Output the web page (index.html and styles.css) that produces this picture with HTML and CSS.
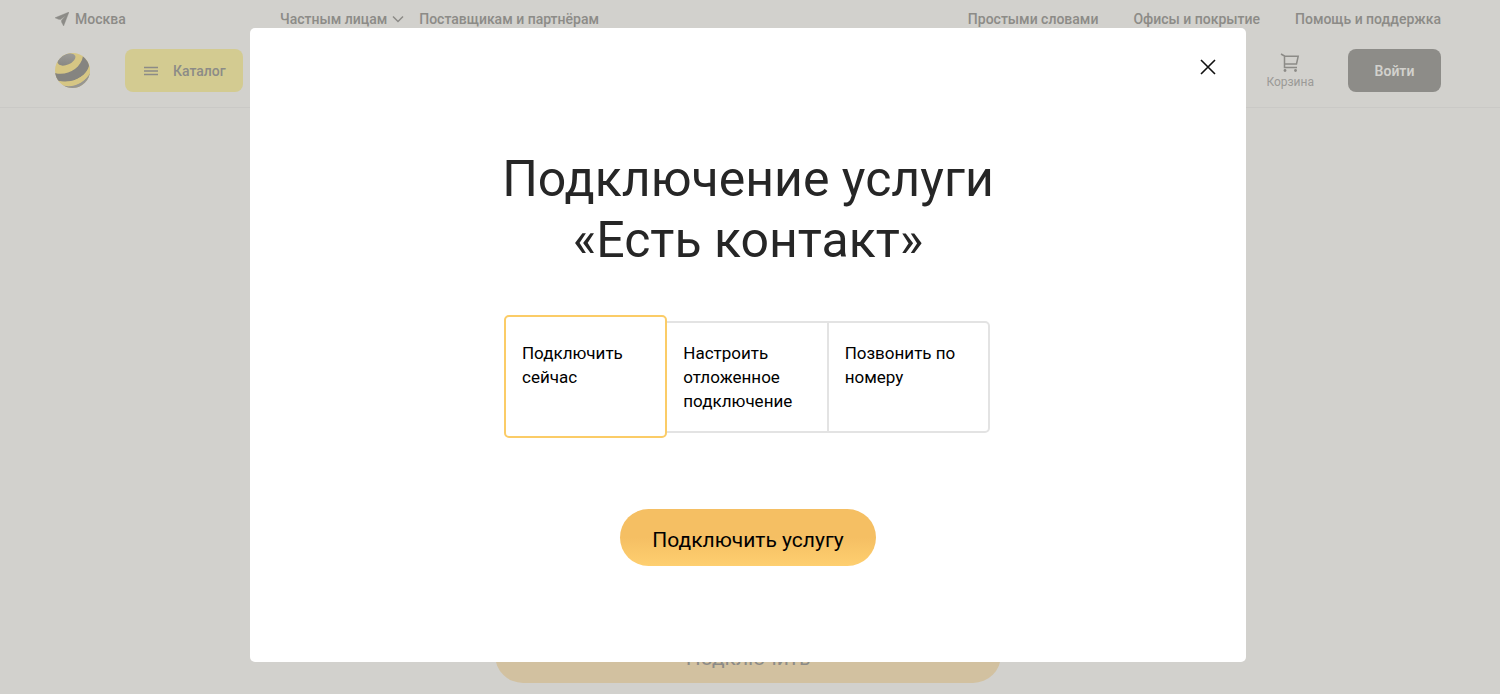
FILE: index.html
```
<!DOCTYPE html>
<html lang="ru">
<head>
<meta charset="utf-8">
<meta name="viewport" content="width=device-width, initial-scale=1">
<title>Подключение услуги «Есть контакт»</title>
<link rel="stylesheet" href="styles.css">
</head>
<body>
<div class="page">
  <header class="header">
    <div class="topbar">
      <a class="city" href="#">
        <svg width="14" height="14" viewBox="0 0 14 14" aria-hidden="true"><path d="M0 5.800 14 0 8.600 14 6.500 10V8.200L10.500 3.800 5.500 7.500 3.500 7.300z" fill="currentColor" stroke="currentColor" stroke-width="0.400"/></svg>
        Москва
      </a>
      <nav class="nav nav-main">
        <a href="#">Частным лицам
          <svg width="12" height="8" viewBox="0 0 12 8" aria-hidden="true"><path d="M1 1.500 6 6.500l5-5" fill="none" stroke="currentColor" stroke-width="1.500"/></svg>
        </a>
        <a href="#">Поставщикам и партнёрам</a>
      </nav>
      <nav class="nav nav-help">
        <a href="#">Простыми словами</a>
        <a href="#">Офисы и покрытие</a>
        <a href="#">Помощь и поддержка</a>
      </nav>
    </div>
    <div class="mainbar">
      <a class="logo" href="#" aria-label="Главная">
        <svg width="36" height="36" viewBox="0 0 36 36" aria-hidden="true">
          <defs>
            <clipPath id="ball"><circle cx="17.500" cy="17.500" r="17.500"/></clipPath>
            <linearGradient id="cap" x1="0" y1="1" x2="1" y2="0"><stop offset="0" stop-color="#858480"/><stop offset="1" stop-color="#a09f9b"/></linearGradient>
          </defs>
          <g clip-path="url(#ball)">
            <rect width="36" height="36" fill="#d6c684"/>
            <ellipse cx="11.500" cy="6.500" rx="9.500" ry="5.200" transform="rotate(-24 11.500 6.500)" fill="url(#cap)"/>
            <path d="M0 20C11 23.500 26 16 28 3L33 6 34 13C32 23 17 32 3 28L0 24z" fill="#858480"/>
            <path d="M6 32C19 36 31 29 36 18v18H6z" fill="#979692"/>
            <path d="M1 27C15 32 31 25 35 12L36 18C31 29 19 35 7 32z" fill="#d6c684"/>
          </g>
        </svg>
      </a>
      <button class="catalog" type="button">
        <svg width="14" height="10" viewBox="0 0 14 10" aria-hidden="true"><path d="M0 1.500h14M0 5h14M0 8.500h14" stroke="currentColor" stroke-width="1.500"/></svg>
        Каталог
      </button>
      <a class="cart" href="#">
        <svg width="20" height="20" viewBox="0 0 20 20" aria-hidden="true"><path d="M1 2l3.500 2v11.500H17M4.500 4.200H18.200L16.500 12H4.500" fill="none" stroke="currentColor" stroke-width="1.500"/><circle cx="5" cy="18.500" r="1.400" fill="currentColor"/><circle cx="15.500" cy="18.500" r="1.400" fill="currentColor"/></svg>
        Корзина
      </a>
      <button class="login" type="button">Войти</button>
    </div>
  </header>
  <main class="content">
    <button class="connect" type="button">Подключить</button>
  </main>
</div>

<div class="overlay">
  <section class="dialog" role="dialog" aria-modal="true" aria-labelledby="dialog-title">
    <button class="close" type="button" aria-label="Закрыть">
      <svg width="16" height="16" viewBox="0 0 16 16" aria-hidden="true"><path d="M1 1l14 14M15 1 1 15" stroke="currentColor" stroke-width="1.600"/></svg>
    </button>
    <h1 class="title" id="dialog-title">Подключение услуги<br>«Есть контакт»</h1>
    <form class="form">
      <div class="options" role="radiogroup" aria-labelledby="dialog-title">
        <label class="option"><input type="radio" name="when" checked>Подключить сейчас</label>
        <label class="option"><input type="radio" name="when">Настроить отложенное подключение</label>
        <label class="option"><input type="radio" name="when">Позвонить по номеру</label>
      </div>
      <button class="submit" type="button">Подключить услугу</button>
    </form>
  </section>
</div>
</body>
</html>
```
FILE: styles.css
```
* { box-sizing: border-box; }

body {
  margin: 0;
  background: #d2d1cd;
  color: #8c8b87;
  font-family: Roboto, "Liberation Sans", sans-serif;
}

a { color: inherit; text-decoration: none; }
button { border: 0; font: inherit; cursor: pointer; }
svg { display: block; flex: none; }

.page {
  display: flex;
  flex-direction: column;
  height: 100vh;
  overflow: hidden;
}

.header {
  padding: 0 59px 0 55px;
  border-bottom: 1px solid #cac9c6;
}

.topbar {
  display: flex;
  align-items: center;
  height: 37px;
  font-size: 14px;
  font-weight: 500;
}

.city {
  display: flex;
  align-items: center;
  gap: 6px;
  width: 225px;
}

.nav { display: flex; }
.nav a { display: flex; align-items: center; gap: 5px; }
.nav-main { gap: 15px; }
.nav-help { gap: 35px; margin-left: auto; }

.mainbar {
  display: flex;
  align-items: center;
  height: 70px;
  padding-bottom: 3px;
}

.catalog {
  display: flex;
  align-items: center;
  gap: 15px;
  height: 43px;
  margin-left: 34px;
  padding: 0 17px 0 19px;
  border-radius: 8px;
  background: #d3cb91;
  color: #8c8b87;
  font-size: 14px;
  font-weight: 500;
}

.cart {
  display: flex;
  flex-direction: column;
  align-items: center;
  gap: 2px;
  margin-left: auto;
  font-size: 12px;
  line-height: 16px;
  color: #9b9a97;
}

.cart svg { color: #8c8b87; }

.login {
  width: 93px;
  height: 43px;
  margin-left: 34px;
  border-radius: 8px;
  background: #8d8c88;
  color: #d2d1cd;
  font-size: 14px;
  font-weight: 600;
}

.content {
  display: flex;
  flex: 1;
  align-items: flex-end;
  justify-content: center;
  padding: 0 4px 11px 0;
}

.connect {
  width: 506px;
  height: 57px;
  padding-top: 7px;
  border-radius: 28px;
  background: #d2c1a0;
  color: #8c8b87;
  font-size: 21px;
}

.overlay {
  position: fixed;
  inset: 0;
  display: flex;
  justify-content: center;
  padding: 28px 4px 32px 0;
}

.dialog {
  position: relative;
  width: 66.6%;
  padding: 121px 40px 0;
  border-radius: 5px;
  background: #fff;
  color: #000;
}

.close {
  position: absolute;
  top: 27px;
  right: 26px;
  padding: 4px;
  background: none;
  color: #111;
}

.title {
  margin: 0;
  color: #262626;
  font-size: 50px;
  font-weight: 400;
  line-height: 61px;
  text-align: center;
}

.form {
  display: flex;
  flex-direction: column;
  align-items: center;
  gap: 71px;
  margin-top: 44px;
}

.options {
  display: flex;
  align-items: center;
  width: 488px;
  max-width: 100%;
  padding-right: 2px;
}

.option {
  flex: 1;
  height: 112px;
  margin-left: -2px;
  padding: 18px 16px;
  border: 2px solid #e3e3e3;
  font-size: 17px;
  line-height: 24px;
  cursor: pointer;
}

.option:first-child { border-radius: 5px 0 0 5px; margin-left: 0; }
.option:last-child { border-radius: 0 5px 5px 0; }

.option:has(:checked) {
  z-index: 1;
  height: 123px;
  padding: 24px 16px;
  border-color: #fbcc67;
  border-radius: 5px;
}

.option input {
  position: absolute;
  opacity: 0;
  pointer-events: none;
}

.submit {
  height: 57px;
  padding: 5px 32px 0;
  border-radius: 29px;
  background: linear-gradient(#f5bf63 50%, #fecf70);
  color: #000;
  font-size: 21px;
}
```
